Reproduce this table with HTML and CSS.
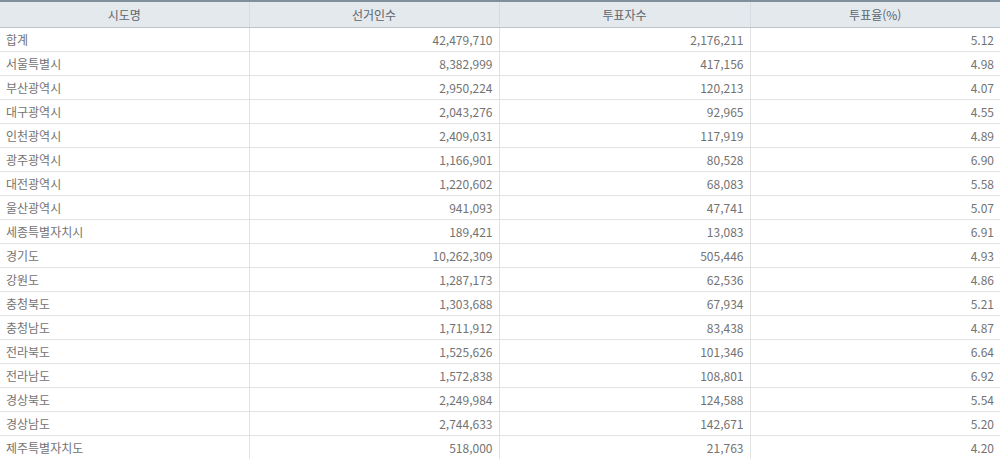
FILE: index.html
```html
<!DOCTYPE html>
<html lang="ko">
<head>
<meta charset="utf-8">
<link rel="stylesheet" href="styles.css">
</head>
<body>
<table class="vote">
  <colgroup>
    <col class="c1"><col class="c2"><col class="c3"><col class="c4">
  </colgroup>
  <thead>
    <tr><th>시도명</th><th>선거인수</th><th>투표자수</th><th>투표율(%)</th></tr>
  </thead>
  <tbody>
    <tr><td class="name">합계</td><td>42,479,710</td><td>2,176,211</td><td>5.12</td></tr>
    <tr><td class="name">서울특별시</td><td>8,382,999</td><td>417,156</td><td>4.98</td></tr>
    <tr><td class="name">부산광역시</td><td>2,950,224</td><td>120,213</td><td>4.07</td></tr>
    <tr><td class="name">대구광역시</td><td>2,043,276</td><td>92,965</td><td>4.55</td></tr>
    <tr><td class="name">인천광역시</td><td>2,409,031</td><td>117,919</td><td>4.89</td></tr>
    <tr><td class="name">광주광역시</td><td>1,166,901</td><td>80,528</td><td>6.90</td></tr>
    <tr><td class="name">대전광역시</td><td>1,220,602</td><td>68,083</td><td>5.58</td></tr>
    <tr><td class="name">울산광역시</td><td>941,093</td><td>47,741</td><td>5.07</td></tr>
    <tr><td class="name">세종특별자치시</td><td>189,421</td><td>13,083</td><td>6.91</td></tr>
    <tr><td class="name">경기도</td><td>10,262,309</td><td>505,446</td><td>4.93</td></tr>
    <tr><td class="name">강원도</td><td>1,287,173</td><td>62,536</td><td>4.86</td></tr>
    <tr><td class="name">충청북도</td><td>1,303,688</td><td>67,934</td><td>5.21</td></tr>
    <tr><td class="name">충청남도</td><td>1,711,912</td><td>83,438</td><td>4.87</td></tr>
    <tr><td class="name">전라북도</td><td>1,525,626</td><td>101,346</td><td>6.64</td></tr>
    <tr><td class="name">전라남도</td><td>1,572,838</td><td>108,801</td><td>6.92</td></tr>
    <tr><td class="name">경상북도</td><td>2,249,984</td><td>124,588</td><td>5.54</td></tr>
    <tr><td class="name">경상남도</td><td>2,744,633</td><td>142,671</td><td>5.20</td></tr>
    <tr><td class="name">제주특별자치도</td><td>518,000</td><td>21,763</td><td>4.20</td></tr>
  </tbody>
</table>
</body>
</html>
```
FILE: styles.css
```css
html, body {
  margin: 0;
  padding: 0;
  background: #ffffff;
}
body {
  font-family: "Noto Sans CJK KR", "Noto Sans", sans-serif;
  font-size: 12px;
  color: #737373;
}
.vote {
  width: 1000px;
  border-collapse: collapse;
  table-layout: fixed;
  border-top: 2px solid #7f909c;
}
.c1 { width: 249px; }
.c2 { width: 250px; }
.c3 { width: 251px; }
.c4 { width: 250px; }
.vote th {
  height: 25px;
  padding: 0;
  background: #e4e9ed;
  font-weight: normal;
  color: #5c656d;
  text-align: center;
  border-bottom: 1px solid #bcc4ca;
  border-left: 1px solid #d5dbe0;
  line-height: 25px;
}
.vote th:first-child { border-left: none; }
.vote td {
  height: 23px;
  padding: 0 6px 0 6px;
  line-height: 23px;
  text-align: right;
  border-bottom: 1px solid #e2e2e2;
  border-left: 1px solid #e2e2e2;
  white-space: nowrap;
}
.vote td:first-child { border-left: none; }
.vote td.name { text-align: left; }
.vote tr:last-child td { border-bottom: 1px solid #d6d6d6; }
```
